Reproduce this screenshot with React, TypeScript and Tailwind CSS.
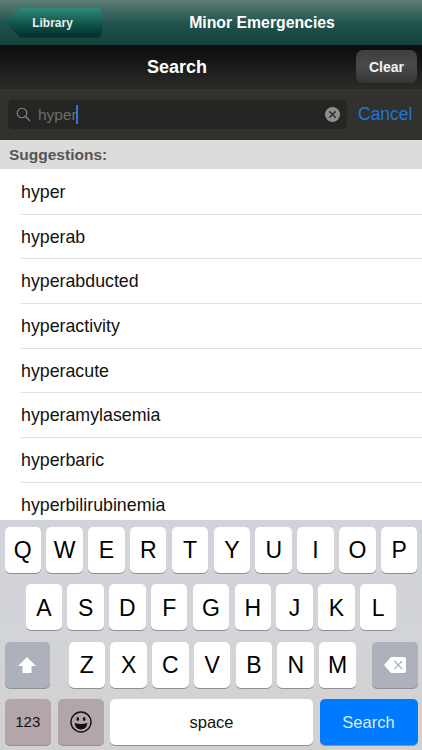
import { X } from "lucide-react";

const words = ["hyper", "hyperab", "hyperabducted", "hyperactivity", "hyperacute", "hyperamylasemia", "hyperbaric", "hyperbilirubinemia"];

function Key({ label }: { label: string }) {
    return (
        <div className="w-[36.5px] h-[46px] bg-white rounded-[5px] shadow-[0_1px_0_#8e9095] flex items-center justify-center pt-[1px] text-[23px] text-black">
            {label}
        </div>
    );
}

function Shift() {
    return (
        <svg width="20" height="18" viewBox="0 0 20 18">
            <path d="M10 1 L19 10 H14.5 V17 H5.5 V10 H1 Z" fill="#fff" />
        </svg>
    );
}

function Backspace() {
    return (
        <svg width="24" height="18" viewBox="0 0 24 18">
            <path d="M8 1 H21 Q23 1 23 3 V15 Q23 17 21 17 H8 L1 9 Z" fill="#fff" />
            <path d="M11.5 5 L19 13 M19 5 L11.5 13" stroke="#adb1ba" strokeWidth="1.2" />
        </svg>
    );
}

function Smiley() {
    return (
        <svg width="22" height="22" viewBox="0 0 22 22">
            <circle cx="11" cy="11" r="10" fill="none" stroke="#111" strokeWidth="1.4" />
            <ellipse cx="7.8" cy="8" rx="1.3" ry="2" fill="#111" />
            <ellipse cx="14.2" cy="8" rx="1.3" ry="2" fill="#111" />
            <path d="M4.5 12 Q11 14 17.5 12 Q16.5 18.5 11 18.5 Q5.5 18.5 4.5 12 Z" fill="#111" />
        </svg>
    );
}

export default function App() {
    return (
        <div className="w-[422px] h-[750px] flex flex-col overflow-hidden bg-white font-['Liberation_Sans',Arial,sans-serif]">
            <header className="h-[45px] shrink-0 flex items-center pl-[6px] bg-gradient-to-b from-[#5d7f78] via-[#22544e] to-[#15403c]">
                <div className="w-[96px] h-[30px] rounded-r-[5px] [clip-path:polygon(14px_0,100%_0,100%_100%,14px_100%,0_50%)] bg-gradient-to-b from-[#2f8a7c] via-[#12574f] to-[#032c28] flex items-center justify-center pr-[3px] text-[12px] font-bold text-[#e6eeec]">
                    Library
                </div>
                <h1 className="w-[320px] text-center text-[15.8px] font-bold text-white">Minor Emergencies</h1>
            </header>

            <div className="h-[45px] shrink-0 relative flex items-center justify-center pr-[68px] bg-gradient-to-b from-[#0c0c0c] to-[#2c2c2b] text-[18px] font-bold text-white">
                Search
                <div className="absolute right-[5px] top-[5px] w-[61px] h-[33px] rounded-[7px] bg-gradient-to-b from-[#3f3f3e] via-[#4a4a49] to-[#353534] flex items-center justify-center pt-[1px] text-[14px] font-bold text-[#f2f2f2]">
                    Clear
                </div>
            </div>

            <div className="h-[50px] shrink-0 flex items-center gap-[11px] pl-[8px] pb-[2px] bg-[#31312d] border-t border-[#3a3a37]">
                <div className="w-[339px] h-[29px] rounded-[5px] bg-[#252523] flex items-center pl-[8px] pr-[7px]">
                    <svg width="15" height="15" viewBox="0 0 15 15" fill="none" stroke="#8a8a88" strokeWidth="1.1">
                        <circle cx="6" cy="6" r="4.8" />
                        <path d="M9.5 9.5 L14 14" />
                    </svg>
                    <span className="ml-[7px] text-[15.5px] text-[#6d6d6a]">hyper</span>
                    <span className="w-[2px] h-[19px] -ml-[1px] bg-[#3a6fe0]" />
                    <span className="ml-auto w-[15px] h-[15px] rounded-full bg-[#8d8d8b] flex items-center justify-center">
                        <X size={11} strokeWidth={3} color="#2a2a28" />
                    </span>
                </div>
                <span className="text-[17.5px] text-[#1f76d8]">Cancel</span>
            </div>

            <div className="h-[29px] shrink-0 flex items-center pl-[9px] bg-[#dcdcdc] text-[15.5px] font-bold text-[#555]">
                Suggestions:
            </div>

            <ul className="flex-1 min-h-0 overflow-hidden pl-[21px] pt-[1px] text-[17.8px] text-[#111]">
                {words.map((w) => (
                    <li key={w} className="h-[44.7px] flex items-center pt-[1px] border-b border-[#e2e2e2]">{w}</li>
                ))}
            </ul>

            <div className="h-[230px] shrink-0 flex flex-col gap-[11.4px] px-[4.5px] pt-[7px] bg-gradient-to-b from-[#d0d3d9] via-[#d2d4d8] to-[#d3d0d0]">
                <div className="flex justify-between">
                    {"QWERTYUIOP".split("").map((k) => <Key key={k} label={k} />)}
                </div>
                <div className="flex justify-center gap-[5.3px]">
                    {"ASDFGHJKL".split("").map((k) => <Key key={k} label={k} />)}
                </div>
                <div className="flex">
                    <div className="w-[45.5px] h-[46px] rounded-[5px] bg-[#adb1bb] shadow-[0_1px_0_#8e9095] flex items-center justify-center">
                        <Shift />
                    </div>
                    <div className="ml-[18.5px] flex gap-[5.3px]">
                        {"ZXCVBNM".split("").map((k) => <Key key={k} label={k} />)}
                    </div>
                    <div className="ml-auto w-[45.5px] h-[46px] rounded-[5px] bg-[#adb1bb] shadow-[0_1px_0_#8e9095] flex items-center justify-center">
                        <Backspace />
                    </div>
                </div>
                <div className="flex gap-[6.5px]">
                    <div className="w-[46.5px] h-[46px] rounded-[5px] bg-[#b2a6a8] shadow-[0_1px_0_#8e9095] flex items-center justify-center text-[15px] text-[#111]">123</div>
                    <div className="w-[46px] h-[46px] rounded-[5px] bg-[#b2a6a8] shadow-[0_1px_0_#8e9095] flex items-center justify-center">
                        <Smiley />
                    </div>
                    <div className="w-[203px] h-[46px] rounded-[5px] bg-white shadow-[0_1px_0_#8e9095] flex items-center justify-center text-[16.5px] text-[#111]">space</div>
                    <div className="flex-1 h-[46px] rounded-[5px] bg-[#007aff] shadow-[0_1px_0_#8e9095] flex items-center justify-center text-[16.5px] text-[#dcecff]">Search</div>
                </div>
            </div>
        </div>
    );
}
